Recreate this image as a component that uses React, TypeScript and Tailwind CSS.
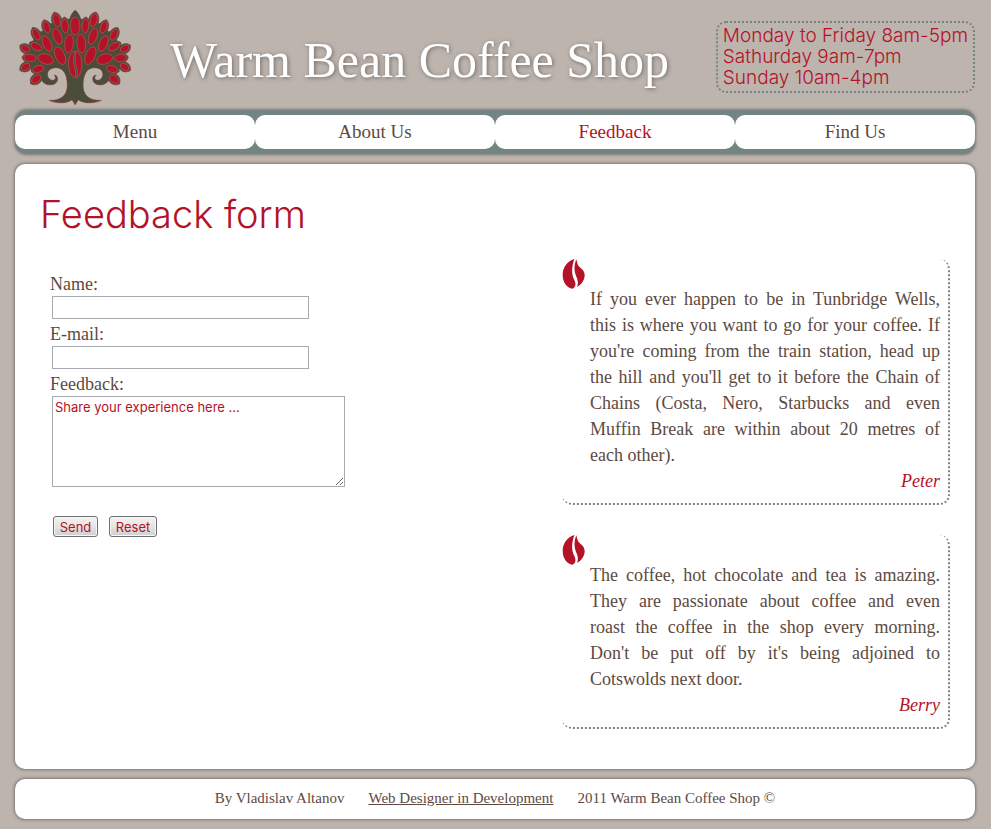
const gothic = "font-[Inter,'Open_Sans',sans-serif]";

type Leaf = [cx: number, cy: number, rx: number, ry: number, angle: number];

const sideLeaves: Leaf[] = [
  [195, 78, 10, 21, -4],
  [170, 61, 10, 20, -14],
  [140, 82, 9, 18, -20],
  [109, 104, 9, 18, -28],
  [172, 109, 12, 25, -20],
  [207, 131, 13, 28, 6],
  [141, 131, 12, 25, -24],
  [109, 140, 10, 18, -60],
  [180, 167, 14, 28, -24],
  [137, 177, 15, 24, -72],
  [90, 174, 11, 18, -85],
  [77, 146, 9, 14, -60],
  [77, 201, 9, 14, 60],
  [115, 207, 10, 17, 75],
  [109, 237, 10, 16, 50],
];

function leafShape(rx: number, ry: number) {
  const x = (rx + 5) / 0.75;
  const y = ry + 6;
  return `M0 ${-y} C${x} ${-y * 0.6} ${x} ${y * 0.6} 0 ${y} C${-x} ${y * 0.6} ${-x} ${-y * 0.6} 0 ${-y}Z`;
}

function TreeHalf() {
  return (
    <>
      {sideLeaves.map(([cx, cy, rx, ry, a]) => (
        <path key={`${cx}-${cy}`} d={leafShape(rx, ry)} transform={`translate(${cx} ${cy}) rotate(${a})`} />
      ))}
      <path d="M226 314 L216 299 C198 312 168 310 147 301 C180 303 204 288 202 252 C201 222 190 203 168 203 C145 203 137 220 145 233 C151 243 163 243 166 236 C168 230 165 227 162 226 C173 223 176 240 168 248 C155 260 130 255 123 237 L112 222 L84 200 L76 172 L80 146 L100 122 L108 98 L128 94 L140 72 L160 70 L170 52 L195 62 L226 50Z" />
    </>
  );
}

function TreeBody() {
  return (
    <>
      <TreeHalf />
      <g transform="translate(451 0) scale(-1 1)">
        <TreeHalf />
      </g>
      <path d={leafShape(14, 41)} transform="translate(225.5 78)" />
    </>
  );
}

function RedLeaves() {
  return (
    <>
      {sideLeaves.map(([cx, cy, rx, ry, a]) => (
        <ellipse key={`${cx}-${cy}`} rx={rx} ry={ry} transform={`translate(${cx} ${cy}) rotate(${a})`} />
      ))}
    </>
  );
}

function TreeLogo() {
  return (
    <svg viewBox="54 24 342 297" className="h-[99px] w-[114px] shrink-0" role="img" aria-label="Coffee tree">
      <g fill="#b5545a" stroke="#b5545a" strokeWidth="3">
        <TreeBody />
      </g>
      <g fill="#4b4c3a">
        <TreeBody />
      </g>
      <g fill="#b31228" stroke="#c06860" strokeWidth="1.5">
        <RedLeaves />
        <g transform="translate(451 0) scale(-1 1)">
          <RedLeaves />
        </g>
        <ellipse cx="225.5" cy="78" rx="14" ry="27" />
        <path d="M225 153 C199 158 199 222 225 234 C232 210 212 190 225 153Z" />
        <path d="M229 153 C252 162 250 224 230 234 C239 208 218 188 229 153Z" />
      </g>
    </svg>
  );
}

function Bean() {
  return (
    <svg viewBox="0 0 72 93" className="h-[31px] w-6 shrink-0" aria-hidden="true">
      <path
        fill="#b31228"
        d="M37 0 C14 6 2 28 2 47 C2 70 14 86 32 89 C43 84 42 72 36 61 C29 46 28 26 37 0Z"
      />
      <path
        fill="#b31228"
        d="M43 1 C46 14 47 20 55 26 C63 32 68 38 68 49 C68 64 57 78 45 84 C50 70 47 62 42 50 C36 36 36 18 43 1Z"
      />
    </svg>
  );
}

const pages = ["Menu", "About Us", "Feedback", "Find Us"];

const reviews = [
  {
    author: "Peter",
    text: "If you ever happen to be in Tunbridge Wells, this is where you want to go for your coffee. If you're coming from the train station, head up the hill and you'll get to it before the Chain of Chains (Costa, Nero, Starbucks and even Muffin Break are within about 20 metres of each\u00a0other).",
  },
  {
    author: "Berry",
    text: "The coffee, hot chocolate and tea is amazing. They are passionate about coffee and even roast\u00a0the coffee in the shop every morning. Don't be put off by it's being adjoined to Cotswolds next door.",
  },
];

const panel = "rounded-[10px] bg-white shadow-[0_0_3px_1px_#7d7770]";
const field = "ml-0.5 block border border-[#a9a9b0] bg-white px-0.5 text-[13px] text-[#b31228] outline-none";
const button =
  "h-[21px] rounded-[3px] border border-[#707070] bg-linear-to-b from-[#f3f3f3] via-[#e4e4e4] to-[#cfcfcf] text-[13px] leading-[18px] text-[#b31228] shadow-[inset_0_0_0_1px_#f6f6f6]";

export default function App() {
  return (
    <div className="min-h-screen bg-[#bdb4ae] pr-4 pb-[10px] pl-[15px] font-['Liberation_Serif',serif] text-[#5c4a42]">
      <header className="flex h-[110px] items-start pt-2">
        <div className="pl-[3px]">
          <TreeLogo />
        </div>
        <h1 className="pt-[23px] pl-[38px] text-[50px] leading-[58px] whitespace-nowrap text-white [text-shadow:1px_1px_4px_#6f6a64]">
          Warm Bean Coffee Shop
        </h1>
        <p
          className={`mt-[13px] ml-auto rounded-[10px] border-2 border-dotted border-[#748484] px-[5px] pt-[2px] pb-[3px] text-[19px] leading-[21px] font-light whitespace-nowrap text-[#b31228] ${gothic}`}
        >
          Monday to Friday 8am-5pm
          <br />
          Sathurday 9am-7pm
          <br />
          Sunday 10am-4pm
        </p>
      </header>

      <nav className="grid grid-cols-4 rounded-[12px] bg-[#748484] py-[5px] shadow-[0_0_3px_1px_#7d7770]">
        {pages.map((page) => (
          <a
            key={page}
            href="#"
            className={`h-[34px] rounded-[10px] bg-white text-center text-[19px] leading-[34px] ${page === "Feedback" ? "text-[#b31228]" : ""}`}
          >
            {page}
          </a>
        ))}
      </nav>

      <main className={`mt-[10px] px-[25px] pt-[27px] pb-10 ${panel}`}>
        <h2 className={`text-[38px] leading-[46px] font-light text-[#b31228] ${gothic}`}>Feedback form</h2>
        <div className="mt-[22px] flex justify-between gap-8">
          <form className="pt-[10px] pl-[10px] text-[18px]" onSubmit={(e) => e.preventDefault()}>
            <label htmlFor="name" className="block pt-1 leading-[23px]">
              Name:
            </label>
            <input id="name" className={`h-[23px] w-[257px] ${field} ${gothic}`} />
            <label htmlFor="email" className="block pt-1 leading-[23px]">
              E-mail:
            </label>
            <input id="email" type="email" className={`h-[23px] w-[257px] ${field} ${gothic}`} />
            <label htmlFor="feedback" className="block pt-1 leading-[23px]">
              Feedback:
            </label>
            <textarea
              id="feedback"
              defaultValue="Share your experience here ..."
              className={`h-[91px] w-[293px] pt-0.5 leading-4 ${field} ${gothic}`}
            />
            <div className="mt-[29px] ml-[3px] flex gap-[11px]">
              <button type="submit" className={`w-[45px] ${button} ${gothic}`}>
                Send
              </button>
              <button type="reset" className={`w-12 ${button} ${gothic}`}>
                Reset
              </button>
            </div>
          </form>

          <div className="flex w-[388px] shrink-0 flex-col gap-[30px]">
            {reviews.map((review) => (
              <figure
                key={review.author}
                className="flex items-start gap-1 rounded-[10px] border-r-2 border-b-2 border-dotted border-[#748484] pr-2 pb-[9px]"
              >
                <Bean />
                <div className="grow pt-[27px] text-[18px] leading-[26px]">
                  <blockquote className="text-justify">{review.text}</blockquote>
                  <figcaption className="text-right text-[#b31228] italic">{review.author}</figcaption>
                </div>
              </figure>
            ))}
          </div>
        </div>
      </main>

      <footer className={`mt-[10px] flex h-10 items-center justify-center gap-6 pb-0.5 text-[15px] ${panel}`}>
        <span>By Vladislav Altanov</span>
        <a href="#" className="underline">
          Web Designer in Development
        </a>
        <span>2011 Warm Bean Coffee Shop ©</span>
      </footer>
    </div>
  );
}
